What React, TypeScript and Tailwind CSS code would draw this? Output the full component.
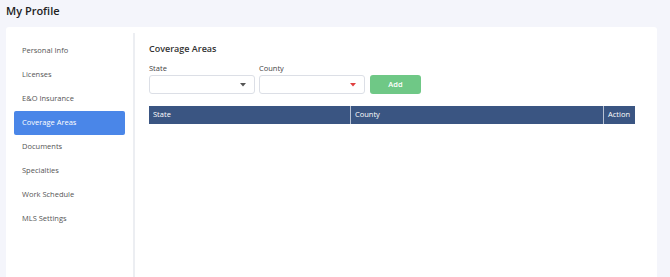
import React from "react";

const items = [
  "Personal Info",
  "Licenses",
  "E&O Insurance",
  "Coverage Areas",
  "Documents",
  "Specialties",
  "Work Schedule",
  "MLS Settings",
];

function Caret({ color }: { color: string }) {
  return (
    <svg width="6" height="4" viewBox="0 0 6 4" className="block">
      <path d="M0 0 L6 0 L3 3.5 Z" fill={color} />
    </svg>
  );
}

export default function App() {
  return (
    <div
      className="w-[670px] h-[277px] overflow-hidden bg-[#f4f5fb] text-[#333]"
      style={{ fontFamily: '"Open Sans", "Noto Sans", sans-serif' }}
    >
      <div className="h-[27px] pl-[6px] pt-[3px] text-[11px] font-semibold text-[#222] leading-[16px]">
        My Profile
      </div>
      <div className="ml-[6px] w-[651px] h-[260px] bg-white rounded-[3px] flex">
        <div className="w-[129px] shrink-0 pt-[12px] pl-[8px] border-r-2 border-[#eceef2] mt-[6px]">
          <div className="-mt-[6px] flex flex-col">
            {items.map((it) => (
              <div
                key={it}
                className={
                  "w-[111px] h-[24px] flex items-center pl-[8px] text-[7.5px] rounded-[2px] " +
                  (it === "Coverage Areas"
                    ? "bg-[#4a86e8] text-white"
                    : "text-[#555]")
                }
              >
                {it}
              </div>
            ))}
          </div>
        </div>
        <div className="flex-1 pl-[14px] pt-[16px] pr-[22px]">
          <div className="text-[9px] font-semibold text-[#333] leading-[12px]">
            Coverage Areas
          </div>
          <div className="flex items-end gap-[4px] mt-[8px]">
            <div className="flex flex-col">
              <div className="text-[7.5px] text-[#444] leading-[10px] mb-[2px]">State</div>
              <div className="w-[106px] h-[19px] border border-[#dcdfe6] rounded-[3px] flex items-center justify-end pr-[8px]">
                <Caret color="#555" />
              </div>
            </div>
            <div className="flex flex-col">
              <div className="text-[7.5px] text-[#444] leading-[10px] mb-[2px]">County</div>
              <div className="w-[106px] h-[19px] border border-[#dcdfe6] rounded-[3px] flex items-center justify-end pr-[8px]">
                <Caret color="#e04040" />
              </div>
            </div>
            <button className="ml-[1px] w-[51px] h-[19px] bg-[#6fc886] rounded-[3px] text-white text-[7.5px] font-semibold">
              Add
            </button>
          </div>
          <div className="mt-[12px] flex h-[18px] bg-[#3a5582] text-white text-[7.5px] w-[486px]">
            <div className="w-[202px] border-r border-[#b8c2d4] flex items-center pl-[4px]">State</div>
            <div className="w-[253px] border-r border-[#b8c2d4] flex items-center pl-[4px]">County</div>
            <div className="flex-1 flex items-center pl-[4px]">Action</div>
          </div>
        </div>
      </div>
    </div>
  );
}
